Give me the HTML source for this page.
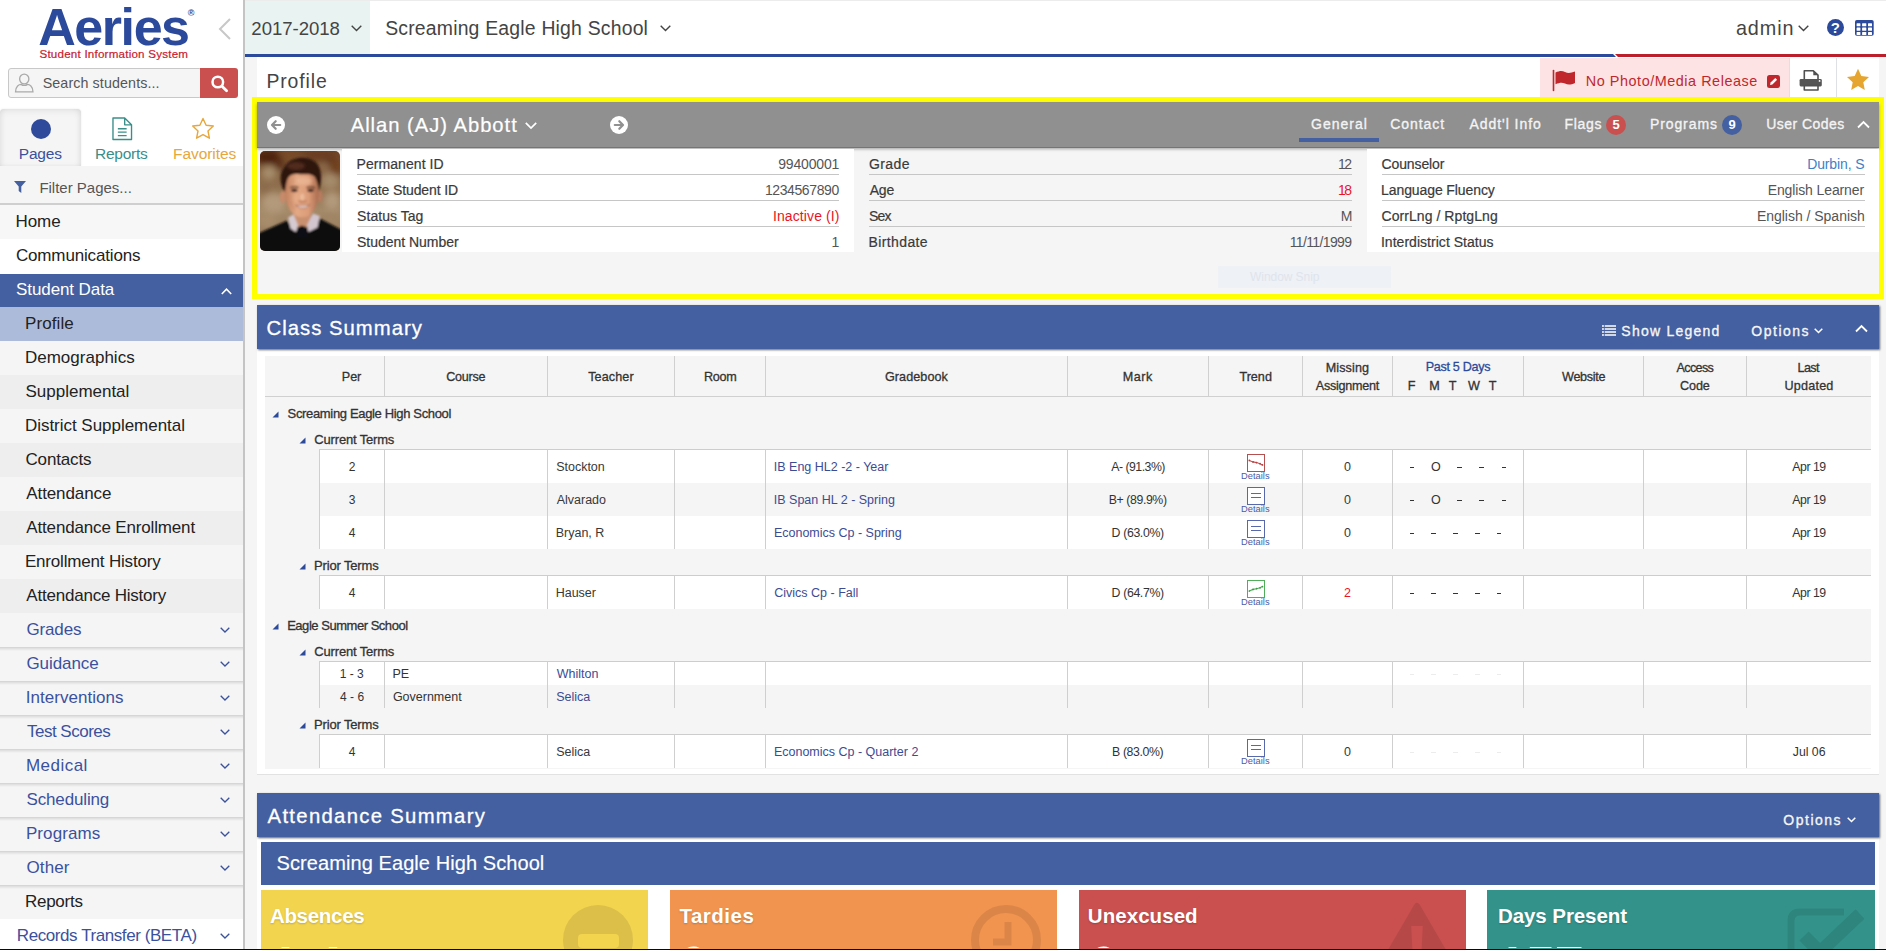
<!DOCTYPE html>
<html><head><meta charset="utf-8"><title>Profile</title><style>
*{box-sizing:border-box;margin:0;padding:0}
html,body{width:1886px;height:950px;overflow:hidden;background:#fff}
body{font-family:"Liberation Sans",sans-serif;color:#333;position:relative;font-size:14px}
.a{position:absolute;white-space:nowrap}
.t{position:absolute;white-space:nowrap;line-height:1;transform-origin:0 50%}
svg{position:absolute;overflow:visible}
</style></head><body>
<div class="a" style="left:245px;top:57px;width:1641px;height:893px;background:#f5f5f5;"></div>
<div class="a" style="left:257px;top:57px;width:1622px;height:41px;background:#fff;"></div>
<div class="a" style="left:0px;top:0px;width:243px;height:950px;background:#fff;"></div>
<div class="a" style="left:243px;top:0px;width:2px;height:950px;background:#c4c4c4;"></div>
<div class="t" style="left:38.20px;top:0.8px;font-size:52px;color:#2b4a9b;font-weight:bold;letter-spacing:-1.428px;">Aeries</div>
<div class="t" style="left:187.67px;top:8.5px;font-size:9px;color:#2b4a9b;font-weight:bold;">&reg;</div>
<div class="t" style="left:39.48px;top:47.9px;font-size:11.6px;color:#c8202f;letter-spacing:0.217px;-webkit-text-stroke:0.2px #c8202f;">Student Information System</div>
<svg style="left:218px;top:18px" width="14" height="22" viewBox="0 0 14 22"><path d="M12 1 L2 11 L12 21" fill="none" stroke="#c8c8c8" stroke-width="2"/></svg>
<div class="a" style="left:8px;top:68px;width:194px;height:29.5px;background:#f5f5f5;border:1px solid #c8c8c8;border-radius:3px"></div>
<div class="a" style="left:200px;top:68px;width:38px;height:30px;background:#c9504f;border-radius:0 3px 3px 0"></div>
<svg style="left:14.3px;top:71.6px" width="20.5" height="21.5" viewBox="0 0 20 20" preserveAspectRatio="none"><circle cx="10" cy="6.5" r="4.5" fill="none" stroke="#aaa" stroke-width="1.3"/><path d="M1.5 18.5 C1.5 13 5 11.5 7 11.5 C8.5 12.8 11.5 12.8 13 11.5 C15 11.5 18.5 13 18.5 18.5 Z" fill="none" stroke="#aaa" stroke-width="1.3"/></svg>
<div class="t" style="left:42.66px;top:76.25px;font-size:14.3px;color:#555;letter-spacing:0.098px;">Search students...</div>
<svg style="left:210px;top:74px" width="18" height="18" viewBox="0 0 18 18"><circle cx="7.8" cy="8" r="5.3" fill="none" stroke="#fff" stroke-width="2.5"/><path d="M12 12.2 L16.6 16.8" stroke="#fff" stroke-width="2.8" stroke-linecap="round"/></svg>
<div class="a" style="left:0px;top:109px;width:80.5px;height:57px;background:#f5f5f5;border-radius:4px 4px 0 0;box-shadow:inset 0 2px 7px rgba(0,0,0,.07),inset 3px 0 6px -3px rgba(0,0,0,.06),inset -3px 0 6px -3px rgba(0,0,0,.08),0 0 2px rgba(0,0,0,.1)"></div>
<div class="a" style="left:0px;top:166px;width:243px;height:38px;background:#f5f5f5;"></div>
<div class="a" style="left:30.5px;top:118.5px;width:20px;height:20px;border-radius:50%;background:#2f4a9a"></div>
<div class="t" style="left:18.76px;top:145.85px;font-size:15.5px;color:#3a519e;letter-spacing:-0.190px;">Pages</div>
<svg style="left:111.6px;top:117px" width="20.5" height="23.5" viewBox="0 0 21 24"><path d="M1 1 H13 L20 8 V23 H1 Z M13 1 V8 H20" fill="none" stroke="#3a8e8a" stroke-width="1.4" stroke-linejoin="round"/><path d="M6 12 H15 M6 15.5 H15 M6 19 H15" stroke="#3a8e8a" stroke-width="1.3"/></svg>
<div class="t" style="left:94.96px;top:145.85px;font-size:15.5px;color:#3a8e8a;letter-spacing:-0.245px;">Reports</div>
<svg style="left:191px;top:117px" width="24" height="23" viewBox="0 0 24 23"><path d="M12 1.5 L15.1 8.2 L22.3 9 L17 14 L18.4 21.2 L12 17.6 L5.6 21.2 L7 14 L1.7 9 L8.9 8.2 Z" fill="none" stroke="#e6a73c" stroke-width="1.4" stroke-linejoin="round"/></svg>
<div class="t" style="left:173.01px;top:145.85px;font-size:15.5px;color:#e6a73c;letter-spacing:-0.053px;">Favorites</div>
<svg style="left:14px;top:181px" width="12" height="12" viewBox="0 0 12 12"><path d="M0 0 H12 L7.3 5.5 V12 L4.7 10 V5.5 Z" fill="#4560a0"/></svg>
<div class="t" style="left:39.40px;top:179.5px;font-size:15px;color:#555;letter-spacing:-0.007px;">Filter Pages...</div>
<div class="a" style="left:0px;top:203px;width:243px;height:2px;background:#cfcfcf;"></div>
<div class="a" style="left:0px;top:205px;width:243px;height:33.5px;background:#f7f7f7;"></div>
<div class="t" style="left:15.44px;top:212.5px;font-size:17px;color:#222;letter-spacing:-0.022px;">Home</div>
<div class="a" style="left:0px;top:238.5px;width:243px;height:35.5px;background:#fff;"></div>
<div class="t" style="left:15.95px;top:246.5px;font-size:17px;color:#222;letter-spacing:-0.154px;">Communications</div>
<div class="a" style="left:0px;top:274px;width:243px;height:33px;background:#4560a0;"></div>
<div class="t" style="left:16.04px;top:280.5px;font-size:17px;color:#fff;letter-spacing:-0.092px;">Student Data</div>
<svg style="left:221px;top:288px" width="11" height="7" viewBox="0 0 11 7"><path d="M0.8 6 L5.5 1.2 L10.2 6" fill="none" stroke="#fff" stroke-width="1.6"/></svg>
<div class="a" style="left:0px;top:307px;width:243px;height:34px;background:#adbbdb;"></div>
<div class="t" style="left:24.94px;top:314.5px;font-size:17px;color:#222;letter-spacing:0.107px;">Profile</div>
<div class="a" style="left:0px;top:341px;width:243px;height:34px;background:#f5f5f5;"></div>
<div class="t" style="left:24.94px;top:348.5px;font-size:17px;color:#222;letter-spacing:0.010px;">Demographics</div>
<div class="a" style="left:0px;top:375px;width:243px;height:34px;background:#eeeeee;"></div>
<div class="t" style="left:25.54px;top:382.5px;font-size:17px;color:#222;letter-spacing:-0.015px;">Supplemental</div>
<div class="a" style="left:0px;top:409px;width:243px;height:34px;background:#f5f5f5;"></div>
<div class="t" style="left:24.94px;top:416.5px;font-size:17px;color:#222;letter-spacing:-0.029px;">District Supplemental</div>
<div class="a" style="left:0px;top:443px;width:243px;height:34px;background:#eeeeee;"></div>
<div class="t" style="left:25.45px;top:450.5px;font-size:17px;color:#222;letter-spacing:-0.146px;">Contacts</div>
<div class="a" style="left:0px;top:477px;width:243px;height:34px;background:#f5f5f5;"></div>
<div class="t" style="left:26.30px;top:484.5px;font-size:17px;color:#222;letter-spacing:-0.104px;">Attendance</div>
<div class="a" style="left:0px;top:511px;width:243px;height:34px;background:#eeeeee;"></div>
<div class="t" style="left:26.30px;top:518.5px;font-size:17px;color:#222;letter-spacing:-0.158px;">Attendance Enrollment</div>
<div class="a" style="left:0px;top:545px;width:243px;height:34px;background:#f5f5f5;"></div>
<div class="t" style="left:24.94px;top:552.5px;font-size:17px;color:#222;letter-spacing:-0.184px;">Enrollment History</div>
<div class="a" style="left:0px;top:579px;width:243px;height:34px;background:#eeeeee;"></div>
<div class="t" style="left:26.30px;top:586.5px;font-size:17px;color:#222;letter-spacing:-0.215px;">Attendance History</div>
<div class="a" style="left:0px;top:613px;width:243px;height:34px;background:#f5f5f5;"></div>
<div class="t" style="left:26.45px;top:620.5px;font-size:17px;color:#3a519e;letter-spacing:-0.143px;">Grades</div>
<svg style="left:220px;top:626.5px" width="10" height="6" viewBox="0 0 10 6"><path d="M0.7 0.7 L5 5 L9.3 0.7" fill="none" stroke="#3a519e" stroke-width="1.3"/></svg>
<div class="a" style="left:0px;top:647px;width:243px;height:34px;background:#f5f5f5;"></div>
<div class="t" style="left:26.45px;top:654.5px;font-size:17px;color:#3a519e;letter-spacing:-0.076px;">Guidance</div>
<svg style="left:220px;top:660.5px" width="10" height="6" viewBox="0 0 10 6"><path d="M0.7 0.7 L5 5 L9.3 0.7" fill="none" stroke="#3a519e" stroke-width="1.3"/></svg>
<div class="a" style="left:0px;top:681px;width:243px;height:34px;background:#f5f5f5;"></div>
<div class="t" style="left:25.77px;top:688.5px;font-size:17px;color:#3a519e;letter-spacing:0.025px;">Interventions</div>
<svg style="left:220px;top:694.5px" width="10" height="6" viewBox="0 0 10 6"><path d="M0.7 0.7 L5 5 L9.3 0.7" fill="none" stroke="#3a519e" stroke-width="1.3"/></svg>
<div class="a" style="left:0px;top:715px;width:243px;height:34px;background:#f5f5f5;"></div>
<div class="t" style="left:26.96px;top:722.5px;font-size:17px;color:#3a519e;letter-spacing:-0.499px;">Test Scores</div>
<svg style="left:220px;top:728.5px" width="10" height="6" viewBox="0 0 10 6"><path d="M0.7 0.7 L5 5 L9.3 0.7" fill="none" stroke="#3a519e" stroke-width="1.3"/></svg>
<div class="a" style="left:0px;top:749px;width:243px;height:34px;background:#f5f5f5;"></div>
<div class="t" style="left:25.94px;top:756.5px;font-size:17px;color:#3a519e;letter-spacing:0.469px;">Medical</div>
<svg style="left:220px;top:762.5px" width="10" height="6" viewBox="0 0 10 6"><path d="M0.7 0.7 L5 5 L9.3 0.7" fill="none" stroke="#3a519e" stroke-width="1.3"/></svg>
<div class="a" style="left:0px;top:783px;width:243px;height:34px;background:#f5f5f5;"></div>
<div class="t" style="left:26.54px;top:790.5px;font-size:17px;color:#3a519e;letter-spacing:-0.153px;">Scheduling</div>
<svg style="left:220px;top:796.5px" width="10" height="6" viewBox="0 0 10 6"><path d="M0.7 0.7 L5 5 L9.3 0.7" fill="none" stroke="#3a519e" stroke-width="1.3"/></svg>
<div class="a" style="left:0px;top:817px;width:243px;height:34px;background:#f5f5f5;"></div>
<div class="t" style="left:25.94px;top:824.5px;font-size:17px;color:#3a519e;letter-spacing:0.080px;">Programs</div>
<svg style="left:220px;top:830.5px" width="10" height="6" viewBox="0 0 10 6"><path d="M0.7 0.7 L5 5 L9.3 0.7" fill="none" stroke="#3a519e" stroke-width="1.3"/></svg>
<div class="a" style="left:0px;top:851px;width:243px;height:34px;background:#f5f5f5;"></div>
<div class="t" style="left:26.54px;top:858.5px;font-size:17px;color:#3a519e;letter-spacing:0.109px;">Other</div>
<svg style="left:220px;top:864.5px" width="10" height="6" viewBox="0 0 10 6"><path d="M0.7 0.7 L5 5 L9.3 0.7" fill="none" stroke="#3a519e" stroke-width="1.3"/></svg>
<div class="a" style="left:0px;top:885px;width:243px;height:34px;background:#f5f5f5;"></div>
<div class="t" style="left:24.94px;top:892.5px;font-size:17px;color:#222;letter-spacing:-0.258px;">Reports</div>
<div class="a" style="left:0px;top:919px;width:243px;height:34px;background:#fff;"></div>
<div class="t" style="left:16.84px;top:926.5px;font-size:17px;color:#3a519e;letter-spacing:-0.425px;">Records Transfer (BETA)</div>
<svg style="left:220px;top:932.5px" width="10" height="6" viewBox="0 0 10 6"><path d="M0.7 0.7 L5 5 L9.3 0.7" fill="none" stroke="#3a519e" stroke-width="1.3"/></svg>
<div class="a" style="left:0px;top:646.5px;width:243px;height:4.5px;background:linear-gradient(rgba(0,0,0,.15),rgba(0,0,0,.08) 40%,rgba(0,0,0,0));"></div>
<div class="a" style="left:0px;top:680.5px;width:243px;height:4.5px;background:linear-gradient(rgba(0,0,0,.15),rgba(0,0,0,.08) 40%,rgba(0,0,0,0));"></div>
<div class="a" style="left:0px;top:714.5px;width:243px;height:4.5px;background:linear-gradient(rgba(0,0,0,.15),rgba(0,0,0,.08) 40%,rgba(0,0,0,0));"></div>
<div class="a" style="left:0px;top:748.5px;width:243px;height:4.5px;background:linear-gradient(rgba(0,0,0,.15),rgba(0,0,0,.08) 40%,rgba(0,0,0,0));"></div>
<div class="a" style="left:0px;top:782.5px;width:243px;height:4.5px;background:linear-gradient(rgba(0,0,0,.15),rgba(0,0,0,.08) 40%,rgba(0,0,0,0));"></div>
<div class="a" style="left:0px;top:816.5px;width:243px;height:4.5px;background:linear-gradient(rgba(0,0,0,.15),rgba(0,0,0,.08) 40%,rgba(0,0,0,0));"></div>
<div class="a" style="left:0px;top:850.5px;width:243px;height:4.5px;background:linear-gradient(rgba(0,0,0,.15),rgba(0,0,0,.08) 40%,rgba(0,0,0,0));"></div>
<div class="a" style="left:0px;top:884.5px;width:243px;height:4.5px;background:linear-gradient(rgba(0,0,0,.15),rgba(0,0,0,.08) 40%,rgba(0,0,0,0));"></div>
<div class="a" style="left:245px;top:0px;width:1641px;height:54px;background:#fff;"></div>
<div class="a" style="left:245px;top:0px;width:1641px;height:1px;background:#ececec;"></div>
<div class="a" style="left:245px;top:1px;width:125px;height:53px;background:#e9f3f2;"></div>
<div class="t" style="left:251.37px;top:19.5px;font-size:18.6px;color:#444;letter-spacing:-0.054px;">2017-2018</div>
<svg style="left:351px;top:25px" width="11" height="7" viewBox="0 0 11 7"><path d="M0.7 0.7 L5.5 5.5 L10.3 0.7" fill="none" stroke="#444" stroke-width="1.4"/></svg>
<div class="t" style="left:385.13px;top:18.6px;font-size:19.4px;color:#444;letter-spacing:0.200px;">Screaming Eagle High School</div>
<svg style="left:660px;top:25px" width="11" height="7" viewBox="0 0 11 7"><path d="M0.7 0.7 L5.5 5.5 L10.3 0.7" fill="none" stroke="#444" stroke-width="1.4"/></svg>
<div class="t" style="left:1735.91px;top:19.3px;font-size:19.8px;color:#444;letter-spacing:0.931px;">admin</div>
<svg style="left:1798px;top:25px" width="11" height="7" viewBox="0 0 11 7"><path d="M0.7 0.7 L5.5 5.5 L10.3 0.7" fill="none" stroke="#444" stroke-width="1.4"/></svg>
<div class="a" style="left:1826.8px;top:19.3px;width:17px;height:17px;border-radius:50%;background:#2b4a9b;color:#fff;font-weight:bold;font-size:15px;line-height:17.4px;text-align:center">?</div>
<svg style="left:1855px;top:20px" width="19" height="16" viewBox="0 0 19 16"><rect x="0" y="0" width="18.7" height="15.8" rx="1.8" fill="#2b4a9b"/><g fill="#fff"><rect x="1.6" y="3.3" width="3.8" height="2.9" rx=".5"/><rect x="7.1" y="3.3" width="4.2" height="2.9" rx=".5"/><rect x="13" y="3.3" width="4" height="2.9" rx=".5"/><rect x="1.6" y="7.6" width="3.8" height="3.1" rx=".5"/><rect x="7.1" y="7.6" width="4.2" height="3.1" rx=".5"/><rect x="13" y="7.6" width="4" height="3.1" rx=".5"/><rect x="1.6" y="12" width="3.8" height="2.9" rx=".5"/><rect x="7.1" y="12" width="4.2" height="2.9" rx=".5"/><rect x="13" y="12" width="4" height="2.9" rx=".5"/></g></svg>
<div class="a" style="left:245px;top:54px;width:1368px;height:3px;background:#2b4a9b;"></div>
<svg style="left:1608.5px;top:54px" width="278" height="3" viewBox="0 0 278 3"><path d="M0 0 H4 L7 3 H0 Z" fill="#2b4a9b"/><path d="M6 0 H278 V3 H9 Z" fill="#bb1f2b"/></svg>
<div class="t" style="left:266.45px;top:71.5px;font-size:19.4px;color:#444;letter-spacing:0.888px;">Profile</div>
<div class="a" style="left:1540px;top:58px;width:249px;height:39px;background:#fde3e3;"></div>
<div class="a" style="left:1789px;top:58px;width:1px;height:39px;background:#dde1e4;"></div>
<div class="a" style="left:1836px;top:58px;width:1px;height:39px;background:#dde1e4;"></div>
<svg style="left:1552px;top:70px" width="24" height="21" viewBox="0 0 24 21"><path d="M1.5 0.5 V20.5" stroke="#c0272d" stroke-width="1.6" stroke-linecap="round"/><path d="M3.5 2.5 C8 0.5 10 0.5 13 2 C16 3.5 19 3 23 1.5 V13 C19 14.8 16 15 13 13.6 C10 12.2 8 12.4 3.5 14.2 Z" fill="#c0272d"/></svg>
<div class="t" style="left:1585.85px;top:74.0px;font-size:14.4px;color:#c0272d;letter-spacing:0.542px;">No Photo/Media Release</div>
<svg style="left:1767px;top:75px" width="13" height="13" viewBox="0 0 13 13"><rect width="13" height="13" rx="2.5" fill="#c0272d"/><path d="M3 10 L3.6 7.6 L8.3 2.9 L10.1 4.7 L5.4 9.4 Z" fill="#fff"/></svg>
<svg style="left:1799px;top:69px" width="24" height="23" viewBox="0 0 24 23"><path d="M5.3 10.5 V1.8 H14.3 L19 6.2 V10.5" fill="#fff" stroke="#505050" stroke-width="1.6" stroke-linejoin="round"/><path d="M14.3 1.8 V6.2 H19 Z" fill="#505050"/><rect x="0.6" y="10" width="22.2" height="7.4" rx="1.3" fill="#555"/><path d="M5.3 16.6 V21 H19 V16.6 Z" fill="#fff" stroke="#505050" stroke-width="1.6" stroke-linejoin="round"/><circle cx="20.6" cy="11.9" r=".9" fill="#fff"/></svg>
<svg style="left:1846px;top:68px" width="24" height="23" viewBox="0 0 24 23"><path d="M12 0.8 L15.3 8 L23 8.9 L17.3 14.2 L18.8 22 L12 18.1 L5.2 22 L6.7 14.2 L1 8.9 L8.7 8 Z" fill="#e6a52e"/></svg>
<div class="a" style="left:252px;top:97px;width:1632px;height:202px;background:#f5f5f5;border:5px solid #ffff00"></div>
<div class="a" style="left:257px;top:102px;width:1622px;height:45px;background:#909090;box-shadow:0 1px 0 #757575,0 2px 3px rgba(0,0,0,.35)"></div>
<svg style="left:266.5px;top:115.5px" width="18" height="18" viewBox="0 0 18 18"><circle cx="9" cy="9" r="9" fill="#fff"/><path d="M13.2 9 H5.2 M8.7 5.2 L5 9 L8.7 12.8" fill="none" stroke="#909090" stroke-width="2.2" stroke-linecap="round" stroke-linejoin="round"/></svg>
<svg style="left:610px;top:115.5px" width="18" height="18" viewBox="0 0 18 18"><circle cx="9" cy="9" r="9" fill="#fff"/><path d="M4.8 9 H12.8 M9.3 5.2 L13 9 L9.3 12.8" fill="none" stroke="#909090" stroke-width="2.2" stroke-linecap="round" stroke-linejoin="round"/></svg>
<div class="t" style="left:350.70px;top:114.7px;font-size:20.2px;color:#fff;letter-spacing:0.982px;-webkit-text-stroke:0.2px #fff;">Allan (AJ) Abbott</div>
<svg style="left:525px;top:122px" width="12" height="8" viewBox="0 0 12 8"><path d="M0.8 0.8 L6 6 L11.2 0.8" fill="none" stroke="#fff" stroke-width="1.7"/></svg>
<div class="t" style="left:1311.00px;top:117.4px;font-size:14px;color:#f4f4f4;letter-spacing:0.995px;-webkit-text-stroke:0.32px currentColor;">General</div>
<div class="t" style="left:1390.20px;top:117.4px;font-size:14px;color:#f4f4f4;letter-spacing:0.945px;-webkit-text-stroke:0.32px currentColor;">Contact</div>
<div class="t" style="left:1469.50px;top:117.4px;font-size:14px;color:#f4f4f4;letter-spacing:0.945px;-webkit-text-stroke:0.32px currentColor;">Addt'l Info</div>
<div class="t" style="left:1564.48px;top:117.4px;font-size:14px;color:#f4f4f4;letter-spacing:0.670px;-webkit-text-stroke:0.32px currentColor;">Flags</div>
<div class="t" style="left:1649.88px;top:117.4px;font-size:14px;color:#f4f4f4;letter-spacing:0.917px;-webkit-text-stroke:0.32px currentColor;">Programs</div>
<div class="t" style="left:1766.25px;top:117.4px;font-size:14px;color:#f4f4f4;letter-spacing:0.458px;-webkit-text-stroke:0.32px currentColor;">User Codes</div>
<div class="a" style="left:1299px;top:138px;width:80px;height:4px;background:#4560a0;"></div>
<div class="a" style="left:1606px;top:114.5px;width:20px;height:20px;border-radius:50%;background:#c9504f;color:#fff;font-weight:bold;font-size:13px;line-height:20px;text-align:center">5</div>
<div class="a" style="left:1722px;top:114.5px;width:20px;height:20px;border-radius:50%;background:#4560a0;color:#fff;font-weight:bold;font-size:13px;line-height:20px;text-align:center">9</div>
<svg style="left:1857px;top:120px" width="13" height="9" viewBox="0 0 13 9"><path d="M1 7.5 L6.5 2 L12 7.5" fill="none" stroke="#fff" stroke-width="1.8"/></svg>
<div class="a" style="left:342px;top:149px;width:512px;height:103px;background:#fff;"></div>
<div class="a" style="left:1367px;top:149px;width:512px;height:103px;background:#fff;"></div>
<svg style="left:260px;top:151px" width="80" height="100" viewBox="0 0 80 100">
<defs><clipPath id="pc"><rect width="80" height="100" rx="5"/></clipPath>
<filter id="b1" x="-30%" y="-30%" width="160%" height="160%"><feGaussianBlur stdDeviation="0.8"/></filter>
<filter id="b2" x="-50%" y="-50%" width="200%" height="200%"><feGaussianBlur stdDeviation="3.2"/></filter>
<filter id="b3" x="-50%" y="-50%" width="200%" height="200%"><feGaussianBlur stdDeviation="1.5"/></filter>
<linearGradient id="bgg" x1="0" y1="0" x2="0" y2="1"><stop offset="0" stop-color="#6d4426"/><stop offset="0.3" stop-color="#8b6a48"/><stop offset="0.6" stop-color="#a48a69"/><stop offset="1" stop-color="#8f7253"/></linearGradient>
<linearGradient id="skin" x1="0" y1="0" x2="1" y2="0"><stop offset="0" stop-color="#c07f5d"/><stop offset="0.35" stop-color="#e4a985"/><stop offset="0.7" stop-color="#dc9c79"/><stop offset="1" stop-color="#a96b4d"/></linearGradient>
</defs>
<g clip-path="url(#pc)"><rect width="80" height="100" fill="url(#bgg)"/>
<g filter="url(#b2)">
<ellipse cx="8" cy="6" rx="14" ry="7" fill="#4e2410"/><ellipse cx="20" cy="14" rx="6" ry="5" fill="#5c3018"/><ellipse cx="70" cy="10" rx="8" ry="6" fill="#542a14"/><ellipse cx="30" cy="3" rx="12" ry="4" fill="#7a4c28"/><ellipse cx="60" cy="4" rx="16" ry="6" fill="#6a3c20"/><ellipse cx="76" cy="16" rx="6" ry="10" fill="#70401f"/>
<ellipse cx="9" cy="22" rx="8" ry="7" fill="#a68c6a"/><ellipse cx="5" cy="36" rx="5" ry="6" fill="#8a6a4c"/><ellipse cx="14" cy="52" rx="12" ry="10" fill="#b39a7a"/><ellipse cx="8" cy="70" rx="9" ry="7" fill="#a88d6c"/>
<ellipse cx="70" cy="30" rx="9" ry="8" fill="#a58b6b"/><ellipse cx="72" cy="50" rx="8" ry="9" fill="#b29a7c"/><ellipse cx="70" cy="68" rx="9" ry="6" fill="#a08565"/><ellipse cx="64" cy="16" rx="6" ry="5" fill="#8c6a48"/>
</g>
<g filter="url(#b1)">
<path d="M-2 102 V82.5 L27 69.5 L34 80 H48 L60 67.5 L82 79 V102 Z" fill="#0f0d0d"/>
<path d="M33 58 H51 V72 L42 80 L33 72 Z" fill="#c9906f"/>
<path d="M28.2 66.5 L33.5 63.5 L38 74 L36 81 L30.5 77.5 Z" fill="#d6cad2"/>
<path d="M59.8 65 L53 62.5 L47 74 L48.5 81 L57.5 76.5 Z" fill="#d2c5ce"/>
<path d="M37.2 76.5 L42 74.5 L47.3 76.5 L48.5 86 H36 Z" fill="#111012"/>
<ellipse cx="22.8" cy="46" rx="3" ry="6" fill="#c78a6a"/><ellipse cx="60" cy="45.5" rx="2.6" ry="6" fill="#b97b5e"/>
<path d="M25 40 C25 26 30 21 42 21 C54 21 58.5 27 58.5 40 C58.5 50 56 58 51 63 C46.5 67.3 38 67.3 33.5 63 C28 58 25 50 25 40 Z" fill="url(#skin)"/>
<path d="M24.8 41 C20 34 18 22 26 14 C32 6 46 4.5 54 10 C61 14 63 26 59 40 C58 35 57.5 30 54.5 25.5 C50 21.5 44 24 38 23 C33 22.5 29 24 27.5 28 C26 32 25.8 36 24.8 41 Z" fill="#2f170f"/>
<path d="M30 36.8 C33 35.2 36 35.4 38.5 36.6 M46.5 36.6 C49 35.3 52 35.3 55 36.8" stroke="#4a2a1c" stroke-width="1.3" fill="none"/>
<ellipse cx="34.3" cy="39.3" rx="3.6" ry="1.9" fill="#7a4a38"/><ellipse cx="50.6" cy="39.3" rx="3.6" ry="1.9" fill="#7a4a38"/><ellipse cx="34.3" cy="39.3" rx="2.4" ry="1.2" fill="#23140f"/><ellipse cx="50.6" cy="39.3" rx="2.4" ry="1.2" fill="#23140f"/>
<path d="M38.4 49.6 C40.5 51.4 44.5 51.4 46.4 49.6" stroke="#b06f52" stroke-width="1.3" fill="none"/><ellipse cx="42.3" cy="46" rx="2.2" ry="3.4" fill="#f0c0a0" opacity=".8"/>
<path d="M35.6 54.2 C39 55 46 55 49.8 53.8 C47 58 39 58.2 35.6 54.2 Z" fill="#fbf3ee" stroke="#9b5442" stroke-width="0.8"/>
<path d="M31 50 C32 54 33 57 35 59 M54 50 C53 54 52 57 50.5 59" stroke="#c58b6c" stroke-width="0.9" fill="none"/>
</g>
<g filter="url(#b3)"><ellipse cx="36" cy="15" rx="9" ry="4" fill="#5a3020" opacity=".8"/><ellipse cx="44" cy="30" rx="8" ry="4" fill="#eebd9c" opacity=".6"/><ellipse cx="36" cy="47" rx="3" ry="4" fill="#e9ae8b" opacity=".6"/></g>
</g></svg>
<div class="t" style="left:356.58px;top:157.4px;font-size:14px;color:#3a3a3a;letter-spacing:0.058px;-webkit-text-stroke:0.2px currentColor;">Permanent ID</div>
<div class="t" style="left:778.27px;top:157.4px;font-size:14px;color:#555;letter-spacing:-0.177px;">99400001</div>
<div class="a" style="left:357px;top:173.8px;width:482.29999999999995px;height:1.3px;background:#c6c6c6;"></div>
<div class="t" style="left:357.07px;top:183.4px;font-size:14px;color:#3a3a3a;letter-spacing:-0.109px;-webkit-text-stroke:0.2px currentColor;">State Student ID</div>
<div class="t" style="left:764.95px;top:183.4px;font-size:14px;color:#555;letter-spacing:-0.400px;">1234567890</div>
<div class="a" style="left:357px;top:199.8px;width:482.29999999999995px;height:1.3px;background:#c6c6c6;"></div>
<div class="t" style="left:357.07px;top:209.4px;font-size:14px;color:#3a3a3a;letter-spacing:0.044px;-webkit-text-stroke:0.2px currentColor;">Status Tag</div>
<div class="t" style="left:772.94px;top:209.4px;font-size:14px;color:#ea1522;letter-spacing:0.111px;">Inactive (I)</div>
<div class="a" style="left:357px;top:225.8px;width:482.29999999999995px;height:1.3px;background:#c6c6c6;"></div>
<div class="t" style="left:357.07px;top:235.4px;font-size:14px;color:#3a3a3a;letter-spacing:-0.027px;-webkit-text-stroke:0.2px currentColor;">Student Number</div>
<div class="t" style="left:831.56px;top:235.4px;font-size:14px;color:#555;">1</div>
<div class="t" style="left:869.00px;top:157.4px;font-size:14px;color:#3a3a3a;letter-spacing:0.385px;-webkit-text-stroke:0.2px currentColor;">Grade</div>
<div class="t" style="left:1338.05px;top:157.4px;font-size:14px;color:#555;letter-spacing:-1.560px;">12</div>
<div class="a" style="left:869px;top:173.8px;width:483px;height:1.3px;background:#c6c6c6;"></div>
<div class="t" style="left:869.70px;top:183.4px;font-size:14px;color:#3a3a3a;letter-spacing:-0.180px;-webkit-text-stroke:0.2px currentColor;">Age</div>
<div class="t" style="left:1338.05px;top:183.4px;font-size:14px;color:#ea1522;letter-spacing:-1.630px;">18</div>
<div class="a" style="left:869px;top:199.8px;width:483px;height:1.3px;background:#c6c6c6;"></div>
<div class="t" style="left:869.07px;top:209.4px;font-size:14px;color:#3a3a3a;letter-spacing:-0.890px;-webkit-text-stroke:0.2px currentColor;">Sex</div>
<div class="t" style="left:1340.83px;top:209.4px;font-size:14px;color:#555;">M</div>
<div class="a" style="left:869px;top:225.8px;width:483px;height:1.3px;background:#c6c6c6;"></div>
<div class="t" style="left:868.58px;top:235.4px;font-size:14px;color:#3a3a3a;letter-spacing:0.372px;-webkit-text-stroke:0.2px currentColor;">Birthdate</div>
<div class="t" style="left:1289.65px;top:235.4px;font-size:14px;color:#555;letter-spacing:-0.621px;">11/11/1999</div>
<div class="t" style="left:1381.50px;top:157.4px;font-size:14px;color:#3a3a3a;letter-spacing:-0.116px;-webkit-text-stroke:0.2px currentColor;">Counselor</div>
<div class="t" style="left:1807.18px;top:157.4px;font-size:14px;color:#3f7fc6;letter-spacing:-0.129px;">Durbin, S</div>
<div class="a" style="left:1381.5px;top:173.8px;width:483.0px;height:1.3px;background:#c6c6c6;"></div>
<div class="t" style="left:1381.08px;top:183.4px;font-size:14px;color:#3a3a3a;letter-spacing:-0.100px;-webkit-text-stroke:0.2px currentColor;">Language Fluency</div>
<div class="t" style="left:1767.68px;top:183.4px;font-size:14px;color:#555;letter-spacing:-0.117px;">English Learner</div>
<div class="a" style="left:1381.5px;top:199.8px;width:483.0px;height:1.3px;background:#c6c6c6;"></div>
<div class="t" style="left:1381.50px;top:209.4px;font-size:14px;color:#3a3a3a;letter-spacing:0.062px;-webkit-text-stroke:0.2px currentColor;">CorrLng / RptgLng</div>
<div class="t" style="left:1756.88px;top:209.4px;font-size:14px;color:#555;letter-spacing:-0.018px;">English / Spanish</div>
<div class="a" style="left:1381.5px;top:225.8px;width:483.0px;height:1.3px;background:#c6c6c6;"></div>
<div class="t" style="left:1380.94px;top:235.4px;font-size:14px;color:#3a3a3a;letter-spacing:0.031px;-webkit-text-stroke:0.2px currentColor;">Interdistrict Status</div>
<div class="a" style="left:1218px;top:266px;width:173px;height:22px;background:#eef1f6;"></div>
<div class="t" style="left:1250.05px;top:271.0px;font-size:12px;color:#dfe4ec;letter-spacing:-0.064px;">Window Snip</div>
<div class="a" style="left:257px;top:349px;width:1622px;height:426px;background:#fff;border-bottom:1px solid #e2e2e2"></div>
<div class="a" style="left:257px;top:305px;width:1622px;height:44px;background:#4560a0;box-shadow:0.5px 1px 2px rgba(0,0,0,.6)"></div>
<div class="t" style="left:266.59px;top:317.85px;font-size:20.3px;color:#fff;letter-spacing:1.017px;-webkit-text-stroke:0.3px #fff;">Class Summary</div>
<svg style="left:1602px;top:325px" width="14" height="11" viewBox="0 0 14 11"><path d="M0 1 H14 M0 4 H14 M0 7 H14 M0 10 H14" stroke="#fff" stroke-width="1.7"/><path d="M2.4 0 V11" stroke="#4560a0" stroke-width="0.8"/></svg>
<div class="t" style="left:1621.37px;top:324.3px;font-size:14px;color:#f6f6f6;letter-spacing:1.226px;-webkit-text-stroke:0.32px currentColor;">Show Legend</div>
<div class="t" style="left:1751.37px;top:324.3px;font-size:14px;color:#f6f6f6;letter-spacing:1.498px;-webkit-text-stroke:0.32px currentColor;">Options</div>
<svg style="left:1814px;top:328px" width="9" height="6" viewBox="0 0 9 6"><path d="M0.7 0.7 L4.5 4.5 L8.3 0.7" fill="none" stroke="#fff" stroke-width="1.5"/></svg>
<svg style="left:1855px;top:324px" width="13" height="9" viewBox="0 0 13 9"><path d="M1 7.5 L6.5 2 L12 7.5" fill="none" stroke="#fff" stroke-width="1.8"/></svg>
<div class="a" style="left:265px;top:356px;width:1606px;height:413px;background:#f5f5f5;"></div>
<div class="a" style="left:265px;top:396px;width:1606px;height:1px;background:#d0d0d0;"></div>
<div class="a" style="left:384.0px;top:356px;width:1px;height:40px;background:#d0d0d0;"></div>
<div class="a" style="left:547.0px;top:356px;width:1px;height:40px;background:#d0d0d0;"></div>
<div class="a" style="left:674.0px;top:356px;width:1px;height:40px;background:#d0d0d0;"></div>
<div class="a" style="left:765.0px;top:356px;width:1px;height:40px;background:#d0d0d0;"></div>
<div class="a" style="left:1067.0px;top:356px;width:1px;height:40px;background:#d0d0d0;"></div>
<div class="a" style="left:1208.0px;top:356px;width:1px;height:40px;background:#d0d0d0;"></div>
<div class="a" style="left:1302.0px;top:356px;width:1px;height:40px;background:#d0d0d0;"></div>
<div class="a" style="left:1392.0px;top:356px;width:1px;height:40px;background:#d0d0d0;"></div>
<div class="a" style="left:1523.0px;top:356px;width:1px;height:40px;background:#d0d0d0;"></div>
<div class="a" style="left:1643.0px;top:356px;width:1px;height:40px;background:#d0d0d0;"></div>
<div class="a" style="left:1746.0px;top:356px;width:1px;height:40px;background:#d0d0d0;"></div>
<div class="t" style="left:341.84px;top:370.8px;font-size:12.6px;color:#333;letter-spacing:-0.079px;-webkit-text-stroke:0.3px currentColor;">Per</div>
<div class="t" style="left:446.22px;top:370.8px;font-size:12.6px;color:#333;letter-spacing:-0.240px;-webkit-text-stroke:0.3px currentColor;">Course</div>
<div class="t" style="left:588.20px;top:370.8px;font-size:12.6px;color:#333;letter-spacing:0.114px;-webkit-text-stroke:0.3px currentColor;">Teacher</div>
<div class="t" style="left:704.04px;top:370.8px;font-size:12.6px;color:#333;letter-spacing:-0.305px;-webkit-text-stroke:0.3px currentColor;">Room</div>
<div class="t" style="left:884.97px;top:370.8px;font-size:12.6px;color:#333;letter-spacing:0.075px;-webkit-text-stroke:0.3px currentColor;">Gradebook</div>
<div class="t" style="left:1122.74px;top:370.8px;font-size:12.6px;color:#333;letter-spacing:0.491px;-webkit-text-stroke:0.3px currentColor;">Mark</div>
<div class="t" style="left:1239.40px;top:370.8px;font-size:12.6px;color:#333;letter-spacing:0.016px;-webkit-text-stroke:0.3px currentColor;">Trend</div>
<div class="t" style="left:1562.05px;top:370.8px;font-size:12.6px;color:#333;letter-spacing:-0.316px;-webkit-text-stroke:0.3px currentColor;">Website</div>
<div class="t" style="left:1325.69px;top:361.9px;font-size:12.6px;color:#333;letter-spacing:0.108px;-webkit-text-stroke:0.3px currentColor;">Missing</div>
<div class="t" style="left:1315.75px;top:379.8px;font-size:12.6px;color:#333;letter-spacing:-0.252px;-webkit-text-stroke:0.3px currentColor;">Assignment</div>
<div class="t" style="left:1676.60px;top:361.9px;font-size:12.6px;color:#333;letter-spacing:-0.679px;-webkit-text-stroke:0.3px currentColor;">Access</div>
<div class="t" style="left:1680.12px;top:379.8px;font-size:12.6px;color:#333;letter-spacing:-0.160px;-webkit-text-stroke:0.3px currentColor;">Code</div>
<div class="t" style="left:1797.49px;top:361.9px;font-size:12.6px;color:#333;letter-spacing:-0.581px;-webkit-text-stroke:0.3px currentColor;">Last</div>
<div class="t" style="left:1784.40px;top:379.8px;font-size:12.6px;color:#333;letter-spacing:0.229px;-webkit-text-stroke:0.3px currentColor;">Updated</div>
<div class="t" style="left:1425.64px;top:360.8px;font-size:12.6px;color:#2b4a9b;letter-spacing:-0.297px;-webkit-text-stroke:0.3px currentColor;">Past 5 Days</div>
<div class="t" style="left:1407.87px;top:379.8px;font-size:12.6px;color:#333;-webkit-text-stroke:0.3px currentColor;">F</div>
<div class="t" style="left:1429.24px;top:379.8px;font-size:12.6px;color:#333;-webkit-text-stroke:0.3px currentColor;">M</div>
<div class="t" style="left:1448.66px;top:379.8px;font-size:12.6px;color:#333;-webkit-text-stroke:0.3px currentColor;">T</div>
<div class="t" style="left:1468.05px;top:379.8px;font-size:12.6px;color:#333;-webkit-text-stroke:0.3px currentColor;">W</div>
<div class="t" style="left:1488.66px;top:379.8px;font-size:12.6px;color:#333;-webkit-text-stroke:0.3px currentColor;">T</div>
<svg style="left:272.0px;top:411px" width="7" height="7" viewBox="0 0 7 7"><path d="M6.5 0.5 V6.5 H0.5 Z" fill="#2b4a9b"/></svg>
<div class="t" style="left:287.62px;top:407.2px;font-size:13px;color:#333;letter-spacing:-0.344px;-webkit-text-stroke:0.3px currentColor;">Screaming Eagle High School</div>
<svg style="left:298.5px;top:437px" width="7" height="7" viewBox="0 0 7 7"><path d="M6.5 0.5 V6.5 H0.5 Z" fill="#2b4a9b"/></svg>
<div class="t" style="left:314.35px;top:433.2px;font-size:13px;color:#333;letter-spacing:-0.174px;-webkit-text-stroke:0.3px currentColor;">Current Terms</div>
<div class="a" style="left:319px;top:449px;width:1552px;height:100px;background:#fff;"></div>
<div class="a" style="left:319px;top:449px;width:1552px;height:1px;background:#cdcdcd;"></div>
<div class="a" style="left:320px;top:483px;width:1551px;height:33px;background:#f5f5f5;"></div>
<div class="a" style="left:319px;top:449px;width:1px;height:100px;background:#cfcfcf;"></div>
<div class="a" style="left:384.0px;top:449px;width:1px;height:100px;background:#cfcfcf;"></div>
<div class="a" style="left:547.0px;top:449px;width:1px;height:100px;background:#cfcfcf;"></div>
<div class="a" style="left:674.0px;top:449px;width:1px;height:100px;background:#cfcfcf;"></div>
<div class="a" style="left:765.0px;top:449px;width:1px;height:100px;background:#cfcfcf;"></div>
<div class="a" style="left:1067.0px;top:449px;width:1px;height:100px;background:#cfcfcf;"></div>
<div class="a" style="left:1208.0px;top:449px;width:1px;height:100px;background:#cfcfcf;"></div>
<div class="a" style="left:1302.0px;top:449px;width:1px;height:100px;background:#cfcfcf;"></div>
<div class="a" style="left:1392.0px;top:449px;width:1px;height:100px;background:#cfcfcf;"></div>
<div class="a" style="left:1523.0px;top:449px;width:1px;height:100px;background:#cfcfcf;"></div>
<div class="a" style="left:1643.0px;top:449px;width:1px;height:100px;background:#cfcfcf;"></div>
<div class="a" style="left:1746.0px;top:449px;width:1px;height:100px;background:#cfcfcf;"></div>
<div class="t" style="left:348.64px;top:461.0px;font-size:12px;color:#333;">2</div>
<div class="t" style="left:556.14px;top:460.75px;font-size:12.5px;color:#383838;">Stockton</div>
<div class="t" style="left:773.77px;top:460.75px;font-size:12.5px;color:#3c4c94;">IB Eng HL2 -2 - Year</div>
<div class="t" style="left:1111.30px;top:460.85px;font-size:12.3px;color:#333;letter-spacing:-0.517px;">A- (91.3%)</div>
<svg style="left:1247px;top:454.0px" width="18" height="18" viewBox="0 0 18 18"><rect x="0.5" y="0.5" width="17" height="17" fill="#fff" stroke="#b4504e" stroke-width="1"/><path d="M2.3 6.4 L6 7.9 L9.5 8.6 L13 9.7 L15.4 10.9" fill="none" stroke="#c9504f" stroke-width="1.1"/><path d="M2.3 6.4 h.1 M6 7.9 h.1 M9.5 8.6 h.1 M13 9.7 h.1 M15.4 10.9 h.1" stroke="#b4403f" stroke-width="1.7" stroke-linecap="round"/></svg>
<div class="t" style="left:1241.06px;top:472.15px;font-size:9.3px;color:#4a5ca6;letter-spacing:0.010px;">Details</div>
<div class="t" style="left:1344.03px;top:460.75px;font-size:12.5px;color:#383838;">0</div>
<div class="a" style="left:1409.5px;top:466.6px;width:4.4px;height:1.3px;background:#333;"></div>
<div class="t" style="left:1430.96px;top:460.75px;font-size:12.5px;color:#333;">O</div>
<div class="a" style="left:1457.3px;top:466.6px;width:4.4px;height:1.3px;background:#333;"></div>
<div class="a" style="left:1479.2px;top:466.6px;width:4.4px;height:1.3px;background:#333;"></div>
<div class="a" style="left:1501.5px;top:466.6px;width:4.4px;height:1.3px;background:#333;"></div>
<div class="t" style="left:1792.35px;top:460.85px;font-size:12.3px;color:#333;letter-spacing:-0.474px;">Apr 19</div>
<div class="t" style="left:348.70px;top:494.0px;font-size:12px;color:#333;">3</div>
<div class="t" style="left:556.70px;top:493.75px;font-size:12.5px;color:#383838;">Alvarado</div>
<div class="t" style="left:773.77px;top:493.75px;font-size:12.5px;color:#3c4c94;">IB Span HL 2 - Spring</div>
<div class="t" style="left:1108.77px;top:493.85px;font-size:12.3px;color:#333;letter-spacing:-0.405px;">B+ (89.9%)</div>
<svg style="left:1247px;top:487.0px" width="18" height="18" viewBox="0 0 18 18"><rect x="0.5" y="0.5" width="17" height="17" fill="#fff" stroke="#5868ab" stroke-width="1"/><path d="M4 6.5 H14 M4 10.5 H14" stroke="#5868ab" stroke-width="1"/></svg>
<div class="t" style="left:1241.06px;top:505.15px;font-size:9.3px;color:#4a5ca6;letter-spacing:0.010px;">Details</div>
<div class="t" style="left:1344.03px;top:493.75px;font-size:12.5px;color:#383838;">0</div>
<div class="a" style="left:1409.5px;top:499.6px;width:4.4px;height:1.3px;background:#333;"></div>
<div class="t" style="left:1430.96px;top:493.75px;font-size:12.5px;color:#333;">O</div>
<div class="a" style="left:1457.3px;top:499.6px;width:4.4px;height:1.3px;background:#333;"></div>
<div class="a" style="left:1479.2px;top:499.6px;width:4.4px;height:1.3px;background:#333;"></div>
<div class="a" style="left:1501.5px;top:499.6px;width:4.4px;height:1.3px;background:#333;"></div>
<div class="t" style="left:1792.35px;top:493.85px;font-size:12.3px;color:#333;letter-spacing:-0.474px;">Apr 19</div>
<div class="t" style="left:348.70px;top:527.0px;font-size:12px;color:#333;">4</div>
<div class="t" style="left:555.70px;top:526.75px;font-size:12.5px;color:#383838;">Bryan, R</div>
<div class="t" style="left:773.90px;top:526.75px;font-size:12.5px;color:#3c4c94;">Economics Cp - Spring</div>
<div class="t" style="left:1111.62px;top:526.85px;font-size:12.3px;color:#333;letter-spacing:-0.361px;">D (63.0%)</div>
<svg style="left:1247px;top:520.0px" width="18" height="18" viewBox="0 0 18 18"><rect x="0.5" y="0.5" width="17" height="17" fill="#fff" stroke="#5868ab" stroke-width="1"/><path d="M4 6.5 H14 M4 10.5 H14" stroke="#5868ab" stroke-width="1"/></svg>
<div class="t" style="left:1241.06px;top:538.15px;font-size:9.3px;color:#4a5ca6;letter-spacing:0.010px;">Details</div>
<div class="t" style="left:1344.03px;top:526.75px;font-size:12.5px;color:#383838;">0</div>
<div class="a" style="left:1409.5px;top:532.6px;width:4.4px;height:1.3px;background:#333;"></div>
<div class="a" style="left:1431.4px;top:532.6px;width:4.4px;height:1.3px;background:#333;"></div>
<div class="a" style="left:1453.3px;top:532.6px;width:4.4px;height:1.3px;background:#333;"></div>
<div class="a" style="left:1475.2px;top:532.6px;width:4.4px;height:1.3px;background:#333;"></div>
<div class="a" style="left:1497.1px;top:532.6px;width:4.4px;height:1.3px;background:#333;"></div>
<div class="t" style="left:1792.35px;top:526.85px;font-size:12.3px;color:#333;letter-spacing:-0.474px;">Apr 19</div>
<svg style="left:298.5px;top:563px" width="7" height="7" viewBox="0 0 7 7"><path d="M6.5 0.5 V6.5 H0.5 Z" fill="#2b4a9b"/></svg>
<div class="t" style="left:313.96px;top:559.2px;font-size:13px;color:#333;letter-spacing:-0.144px;-webkit-text-stroke:0.3px currentColor;">Prior Terms</div>
<div class="a" style="left:319px;top:575px;width:1552px;height:34px;background:#fff;"></div>
<div class="a" style="left:319px;top:575px;width:1552px;height:1px;background:#cdcdcd;"></div>
<div class="a" style="left:319px;top:575px;width:1px;height:34px;background:#cfcfcf;"></div>
<div class="a" style="left:384.0px;top:575px;width:1px;height:34px;background:#cfcfcf;"></div>
<div class="a" style="left:547.0px;top:575px;width:1px;height:34px;background:#cfcfcf;"></div>
<div class="a" style="left:674.0px;top:575px;width:1px;height:34px;background:#cfcfcf;"></div>
<div class="a" style="left:765.0px;top:575px;width:1px;height:34px;background:#cfcfcf;"></div>
<div class="a" style="left:1067.0px;top:575px;width:1px;height:34px;background:#cfcfcf;"></div>
<div class="a" style="left:1208.0px;top:575px;width:1px;height:34px;background:#cfcfcf;"></div>
<div class="a" style="left:1302.0px;top:575px;width:1px;height:34px;background:#cfcfcf;"></div>
<div class="a" style="left:1392.0px;top:575px;width:1px;height:34px;background:#cfcfcf;"></div>
<div class="a" style="left:1523.0px;top:575px;width:1px;height:34px;background:#cfcfcf;"></div>
<div class="a" style="left:1643.0px;top:575px;width:1px;height:34px;background:#cfcfcf;"></div>
<div class="a" style="left:1746.0px;top:575px;width:1px;height:34px;background:#cfcfcf;"></div>
<div class="t" style="left:348.70px;top:587.0px;font-size:12px;color:#333;">4</div>
<div class="t" style="left:555.70px;top:586.75px;font-size:12.5px;color:#383838;">Hauser</div>
<div class="t" style="left:774.27px;top:586.75px;font-size:12.5px;color:#3c4c94;">Civics Cp - Fall</div>
<div class="t" style="left:1111.62px;top:586.85px;font-size:12.3px;color:#333;letter-spacing:-0.361px;">D (64.7%)</div>
<svg style="left:1247px;top:580.0px" width="18" height="18" viewBox="0 0 18 18"><rect x="0.5" y="0.5" width="17" height="17" fill="#fff" stroke="#4fae57" stroke-width="1"/><path d="M2.3 11 L6 9.4 L9.5 8.7 L13 7.8 L15.4 6.6" fill="none" stroke="#4fae57" stroke-width="1.1"/><path d="M2.3 11 h.1 M6 9.4 h.1 M9.5 8.7 h.1 M13 7.8 h.1 M15.4 6.6 h.1" stroke="#3c9a45" stroke-width="1.7" stroke-linecap="round"/></svg>
<div class="t" style="left:1241.06px;top:598.15px;font-size:9.3px;color:#4a5ca6;letter-spacing:0.010px;">Details</div>
<div class="t" style="left:1344.00px;top:586.75px;font-size:12.5px;color:#ea1522;">2</div>
<div class="a" style="left:1409.5px;top:592.6px;width:4.4px;height:1.3px;background:#333;"></div>
<div class="a" style="left:1431.4px;top:592.6px;width:4.4px;height:1.3px;background:#333;"></div>
<div class="a" style="left:1453.3px;top:592.6px;width:4.4px;height:1.3px;background:#333;"></div>
<div class="a" style="left:1475.2px;top:592.6px;width:4.4px;height:1.3px;background:#333;"></div>
<div class="a" style="left:1497.1px;top:592.6px;width:4.4px;height:1.3px;background:#333;"></div>
<div class="t" style="left:1792.35px;top:586.85px;font-size:12.3px;color:#333;letter-spacing:-0.474px;">Apr 19</div>
<svg style="left:272.0px;top:623px" width="7" height="7" viewBox="0 0 7 7"><path d="M6.5 0.5 V6.5 H0.5 Z" fill="#2b4a9b"/></svg>
<div class="t" style="left:287.16px;top:619.2px;font-size:13px;color:#333;letter-spacing:-0.470px;-webkit-text-stroke:0.3px currentColor;">Eagle Summer School</div>
<svg style="left:298.5px;top:649px" width="7" height="7" viewBox="0 0 7 7"><path d="M6.5 0.5 V6.5 H0.5 Z" fill="#2b4a9b"/></svg>
<div class="t" style="left:314.35px;top:645.2px;font-size:13px;color:#333;letter-spacing:-0.174px;-webkit-text-stroke:0.3px currentColor;">Current Terms</div>
<div class="a" style="left:319px;top:661px;width:1552px;height:47px;background:#fff;"></div>
<div class="a" style="left:319px;top:661px;width:1552px;height:1px;background:#cdcdcd;"></div>
<div class="a" style="left:320px;top:685px;width:1551px;height:23px;background:#f5f5f5;"></div>
<div class="a" style="left:319px;top:661px;width:1px;height:47px;background:#cfcfcf;"></div>
<div class="a" style="left:384.0px;top:661px;width:1px;height:47px;background:#cfcfcf;"></div>
<div class="a" style="left:547.0px;top:661px;width:1px;height:47px;background:#cfcfcf;"></div>
<div class="a" style="left:674.0px;top:661px;width:1px;height:47px;background:#cfcfcf;"></div>
<div class="a" style="left:765.0px;top:661px;width:1px;height:47px;background:#cfcfcf;"></div>
<div class="a" style="left:1067.0px;top:661px;width:1px;height:47px;background:#cfcfcf;"></div>
<div class="a" style="left:1208.0px;top:661px;width:1px;height:47px;background:#cfcfcf;"></div>
<div class="a" style="left:1302.0px;top:661px;width:1px;height:47px;background:#cfcfcf;"></div>
<div class="a" style="left:1392.0px;top:661px;width:1px;height:47px;background:#cfcfcf;"></div>
<div class="a" style="left:1523.0px;top:661px;width:1px;height:47px;background:#cfcfcf;"></div>
<div class="a" style="left:1643.0px;top:661px;width:1px;height:47px;background:#cfcfcf;"></div>
<div class="a" style="left:1746.0px;top:661px;width:1px;height:47px;background:#cfcfcf;"></div>
<div class="t" style="left:339.79px;top:668.0px;font-size:12px;color:#333;">1 - 3</div>
<div class="t" style="left:392.50px;top:667.75px;font-size:12.5px;color:#333;">PE</div>
<div class="t" style="left:556.70px;top:667.75px;font-size:12.5px;color:#3c4c94;">Whilton</div>
<div class="a" style="left:1409.5px;top:673.6px;width:4.4px;height:1.3px;background:#ececec;"></div>
<div class="a" style="left:1431.4px;top:673.6px;width:4.4px;height:1.3px;background:#ececec;"></div>
<div class="a" style="left:1453.3px;top:673.6px;width:4.4px;height:1.3px;background:#ececec;"></div>
<div class="a" style="left:1475.2px;top:673.6px;width:4.4px;height:1.3px;background:#ececec;"></div>
<div class="a" style="left:1497.1px;top:673.6px;width:4.4px;height:1.3px;background:#ececec;"></div>
<div class="t" style="left:340.12px;top:691.0px;font-size:12px;color:#333;">4 - 6</div>
<div class="t" style="left:392.88px;top:690.75px;font-size:12.5px;color:#333;">Government</div>
<div class="t" style="left:556.14px;top:690.75px;font-size:12.5px;color:#3c4c94;">Selica</div>
<svg style="left:298.5px;top:722px" width="7" height="7" viewBox="0 0 7 7"><path d="M6.5 0.5 V6.5 H0.5 Z" fill="#2b4a9b"/></svg>
<div class="t" style="left:313.96px;top:718.2px;font-size:13px;color:#333;letter-spacing:-0.144px;-webkit-text-stroke:0.3px currentColor;">Prior Terms</div>
<div class="a" style="left:319px;top:734px;width:1552px;height:34px;background:#fff;"></div>
<div class="a" style="left:319px;top:734px;width:1552px;height:1px;background:#cdcdcd;"></div>
<div class="a" style="left:319px;top:734px;width:1px;height:34px;background:#cfcfcf;"></div>
<div class="a" style="left:384.0px;top:734px;width:1px;height:34px;background:#cfcfcf;"></div>
<div class="a" style="left:547.0px;top:734px;width:1px;height:34px;background:#cfcfcf;"></div>
<div class="a" style="left:674.0px;top:734px;width:1px;height:34px;background:#cfcfcf;"></div>
<div class="a" style="left:765.0px;top:734px;width:1px;height:34px;background:#cfcfcf;"></div>
<div class="a" style="left:1067.0px;top:734px;width:1px;height:34px;background:#cfcfcf;"></div>
<div class="a" style="left:1208.0px;top:734px;width:1px;height:34px;background:#cfcfcf;"></div>
<div class="a" style="left:1302.0px;top:734px;width:1px;height:34px;background:#cfcfcf;"></div>
<div class="a" style="left:1392.0px;top:734px;width:1px;height:34px;background:#cfcfcf;"></div>
<div class="a" style="left:1523.0px;top:734px;width:1px;height:34px;background:#cfcfcf;"></div>
<div class="a" style="left:1643.0px;top:734px;width:1px;height:34px;background:#cfcfcf;"></div>
<div class="a" style="left:1746.0px;top:734px;width:1px;height:34px;background:#cfcfcf;"></div>
<div class="t" style="left:348.70px;top:746.0px;font-size:12px;color:#333;">4</div>
<div class="t" style="left:556.14px;top:745.75px;font-size:12.5px;color:#383838;">Selica</div>
<div class="t" style="left:773.90px;top:745.75px;font-size:12.5px;color:#3c4c94;">Economics Cp - Quarter 2</div>
<div class="t" style="left:1112.07px;top:745.85px;font-size:12.3px;color:#333;letter-spacing:-0.389px;">B (83.0%)</div>
<svg style="left:1247px;top:739.0px" width="18" height="18" viewBox="0 0 18 18"><rect x="0.5" y="0.5" width="17" height="17" fill="#fff" stroke="#5868ab" stroke-width="1"/><path d="M4 6.5 H14 M4 10.5 H14" stroke="#5868ab" stroke-width="1"/></svg>
<div class="t" style="left:1241.06px;top:757.15px;font-size:9.3px;color:#4a5ca6;letter-spacing:0.010px;">Details</div>
<div class="t" style="left:1344.03px;top:745.75px;font-size:12.5px;color:#383838;">0</div>
<div class="a" style="left:1409.5px;top:751.6px;width:4.4px;height:1.3px;background:#ececec;"></div>
<div class="a" style="left:1431.4px;top:751.6px;width:4.4px;height:1.3px;background:#ececec;"></div>
<div class="a" style="left:1453.3px;top:751.6px;width:4.4px;height:1.3px;background:#ececec;"></div>
<div class="a" style="left:1475.2px;top:751.6px;width:4.4px;height:1.3px;background:#ececec;"></div>
<div class="a" style="left:1497.1px;top:751.6px;width:4.4px;height:1.3px;background:#ececec;"></div>
<div class="t" style="left:1792.82px;top:745.85px;font-size:12.3px;color:#333;letter-spacing:-0.021px;">Jul 06</div>
<div class="a" style="left:257px;top:838px;width:1622px;height:112px;background:#fff;"></div>
<div class="a" style="left:257px;top:793px;width:1622px;height:44px;background:#4560a0;box-shadow:0.5px 1px 2px rgba(0,0,0,.6)"></div>
<div class="t" style="left:267.60px;top:805.85px;font-size:20.3px;color:#fff;letter-spacing:1.307px;-webkit-text-stroke:0.3px #fff;">Attendance Summary</div>
<div class="t" style="left:1783.37px;top:812.5px;font-size:14px;color:#f6f6f6;letter-spacing:1.498px;-webkit-text-stroke:0.32px currentColor;">Options</div>
<svg style="left:1846.5px;top:817px" width="9" height="6" viewBox="0 0 9 6"><path d="M0.7 0.7 L4.5 4.5 L8.3 0.7" fill="none" stroke="#fff" stroke-width="1.5"/></svg>
<div class="a" style="left:261px;top:841.5px;width:1614px;height:43.5px;background:#4560a0;"></div>
<div class="t" style="left:276.60px;top:853.3px;font-size:20px;color:#fff;letter-spacing:0.077px;-webkit-text-stroke:0.15px #fff;">Screaming Eagle High School</div>
<div class="a" style="left:261px;top:890px;width:387px;height:60px;background:#f2d44f;overflow:hidden" id="c_Abs"></div>
<div class="t" style="left:269.89px;top:906.05px;font-size:20.5px;color:#fff;font-weight:bold;letter-spacing:-0.290px;text-shadow:0 1px 2px rgba(0,0,0,.2);">Absences</div>
<div class="a" style="left:670px;top:890px;width:387px;height:60px;background:#f19450;overflow:hidden" id="c_Tar"></div>
<div class="t" style="left:679.39px;top:906.05px;font-size:20.5px;color:#fff;font-weight:bold;letter-spacing:0.514px;text-shadow:0 1px 2px rgba(0,0,0,.2);">Tardies</div>
<div class="a" style="left:1079px;top:890px;width:387px;height:60px;background:#c9504f;overflow:hidden" id="c_Une"></div>
<div class="t" style="left:1087.77px;top:906.05px;font-size:20.5px;color:#fff;font-weight:bold;letter-spacing:0.062px;text-shadow:0 1px 2px rgba(0,0,0,.2);">Unexcused</div>
<div class="a" style="left:1487px;top:890px;width:388px;height:60px;background:#33938b;overflow:hidden" id="c_Day"></div>
<div class="t" style="left:1497.97px;top:906.05px;font-size:20.5px;color:#fff;font-weight:bold;letter-spacing:-0.076px;text-shadow:0 1px 2px rgba(0,0,0,.2);">Days Present</div>
<svg style="left:563px;top:905px" width="70" height="45" viewBox="0 0 70 45"><circle cx="35" cy="35" r="35" fill="#dbbf49"/><rect x="15" y="29" width="41" height="14" rx="4" fill="#f2d44f"/></svg>
<svg style="left:971px;top:905px" width="70" height="45" viewBox="0 0 70 45"><circle cx="35" cy="35" r="31" fill="none" stroke="#db8648" stroke-width="8"/><path d="M37 17 V37 H22" fill="none" stroke="#db8648" stroke-width="7"/></svg>
<svg style="left:1375.7px;top:902.3px" width="82" height="48" viewBox="0 0 82 48"><path d="M41 4 L84 78 H-2 Z" fill="#b64947" stroke="#b64947" stroke-width="6" stroke-linejoin="round"/><path d="M35.2 24 H46.8 L45.5 50 H36.5 Z" fill="#c9504f"/></svg>
<svg style="left:1786px;top:905.5px" width="80" height="44.5" viewBox="0 0 80 44.5"><path d="M58 6 H14 Q5 6 5 15 V50" fill="none" stroke="#2e857e" stroke-width="7"/><path d="M18 30 L34 46 L74 8" fill="none" stroke="#2e857e" stroke-width="13"/></svg>
<div class="a" style="left:270px;top:939px;height:9px;overflow:hidden;font-size:52px;line-height:52px;color:#fff;font-weight:bold">1.4</div>
<div class="a" style="left:679px;top:939px;height:9px;overflow:hidden;font-size:52px;line-height:52px;color:#fff;font-weight:bold">0</div>
<div class="a" style="left:1089px;top:939px;height:9px;overflow:hidden;font-size:52px;line-height:52px;color:#fff;font-weight:bold">0</div>
<div class="a" style="left:1497px;top:939px;height:9px;overflow:hidden;font-size:52px;line-height:52px;color:#fff;font-weight:bold">157</div>
<div class="a" style="left:0px;top:948.6px;width:1886px;height:1.4px;background:#0a0a0a;"></div>
</body></html>
